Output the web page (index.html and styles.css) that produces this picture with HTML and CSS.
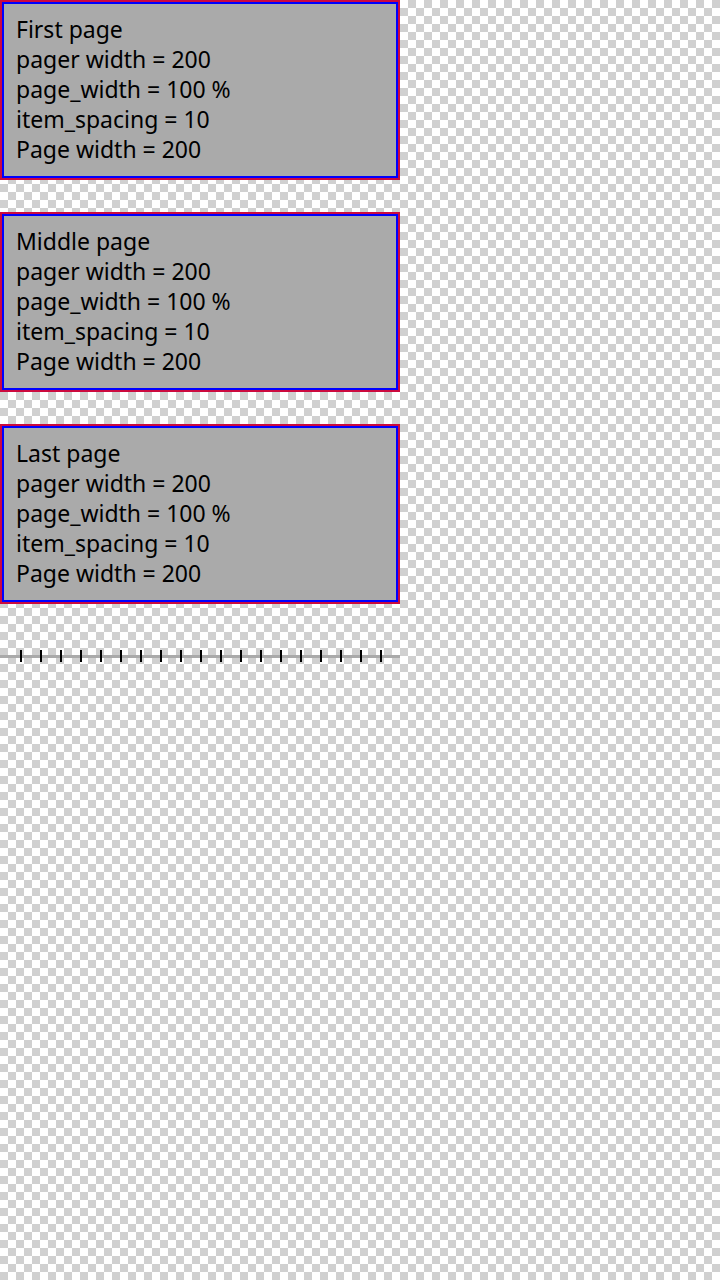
FILE: index.html
```html
<!DOCTYPE html>
<html>
<head>
<meta charset="utf-8">
<link rel="stylesheet" href="styles.css">
</head>
<body>
<div class="pages">
  <div class="page"><div class="inner">
    <div>First page</div>
    <div>pager width = 200</div>
    <div>page_width = 100 %</div>
    <div>item_spacing = 10</div>
    <div>Page width = 200</div>
  </div></div>
  <div class="page"><div class="inner">
    <div>Middle page</div>
    <div>pager width = 200</div>
    <div>page_width = 100 %</div>
    <div>item_spacing = 10</div>
    <div>Page width = 200</div>
  </div></div>
  <div class="page"><div class="inner">
    <div>Last page</div>
    <div>pager width = 200</div>
    <div>page_width = 100 %</div>
    <div>item_spacing = 10</div>
    <div>Page width = 200</div>
  </div></div>
  <div class="pager">
    <div class="track"></div>
    <div class="ticks">
      <span></span><span></span><span></span><span></span><span></span>
      <span></span><span></span><span></span><span></span><span></span>
      <span></span><span></span><span></span><span></span><span></span>
      <span></span><span></span><span></span><span></span>
    </div>
  </div>
</div>
</body>
</html>
```
FILE: styles.css
```css
html, body {
  margin: 0;
  padding: 0;
}
body {
  width: 720px;
  height: 1280px;
  background-color: #ffffff;
  background-image: conic-gradient(#d0d0d0 0 25%, #ffffff 0 50%, #d0d0d0 0 75%, #ffffff 0);
  background-size: 16px 16px;
  font-family: "Noto Sans", "DejaVu Sans", sans-serif;
}
.pages {
  display: flex;
  flex-direction: column;
  gap: 32px;
  width: 400px;
}
.page {
  box-sizing: border-box;
  width: 400px;
  height: 180px;
  border: 2px solid #cc0a3e;
  background: #0000ff;
  padding: 2px;
}
.inner {
  box-sizing: border-box;
  height: 100%;
  background: #aaaaaa;
  padding: 10px 12px 0;
  font-size: 23px;
  line-height: 30px;
  color: #000;
}
.pager {
  position: relative;
  height: 12px;
  margin-top: 14px;
}
.track {
  position: absolute;
  left: 0;
  right: 0;
  top: 5px;
  height: 3px;
  background: #aaaaaa;
}
.ticks {
  position: relative;
  display: flex;
  gap: 18px;
  padding-left: 20px;
  height: 12px;
}
.ticks span {
  width: 2px;
  height: 12px;
  background: #000;
}
```
